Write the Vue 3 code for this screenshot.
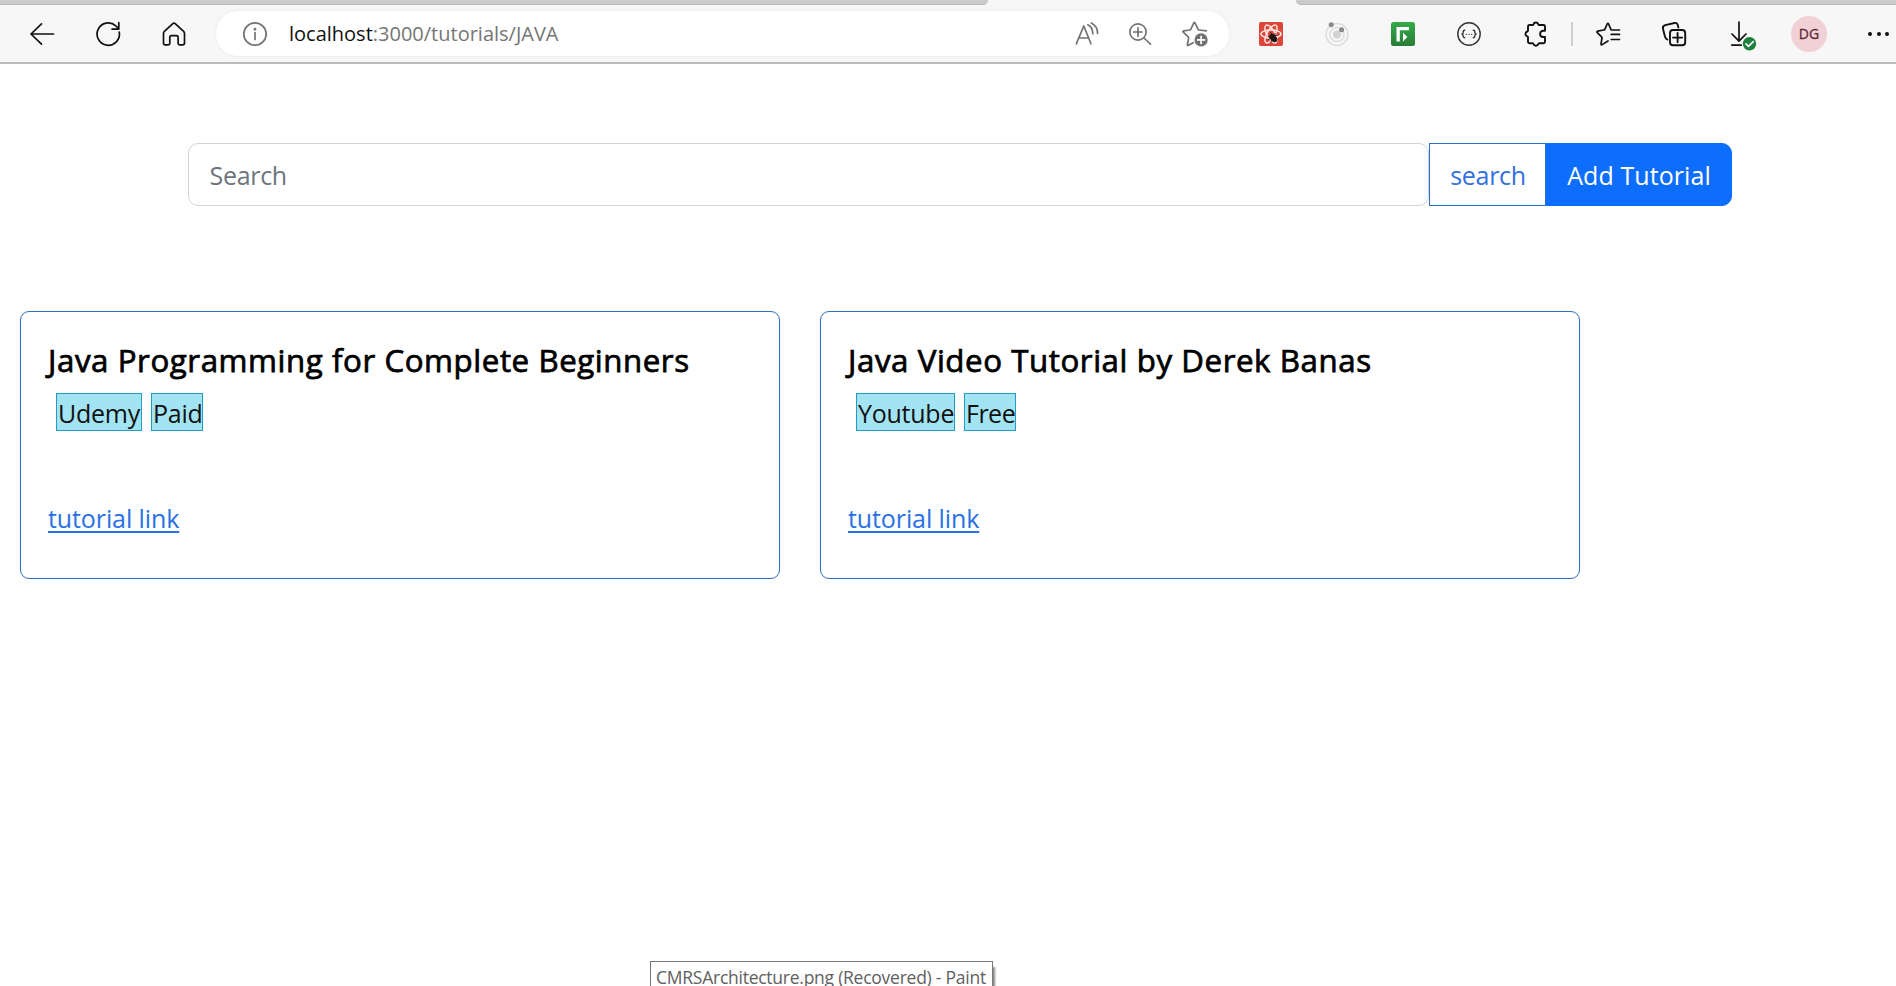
<script setup>
const tutorials = [
  { title: 'Java Programming for Complete Beginners', tags: ['Udemy', 'Paid'] },
  { title: 'Java Video Tutorial by Derek Banas', tags: ['Youtube', 'Free'] }
]
</script>

<template>
  <div class="window">
    <div class="tabs"><div class="tab-left"></div><div class="tab-right"></div></div>
    <header class="toolbar">
      <nav class="nav">
        <svg class="icon" viewBox="0 0 24 24"><path d="M23.500 12H1M11.500 1.800 1 12l10.500 10.200" /></svg>
        <svg class="icon" viewBox="0 0 24 24"><path d="M23.300 10.200A11.200 11.200 0 1 1 19.800 3.800L22.500 6.800M22.800.5v6.600h-6.800" /></svg>
        <svg class="icon" viewBox="0 0 24 24"><path d="M2.400 9.300 10.800 1.600q1.200-1 2.400 0l8.400 7.700q.9.900.9 2V21q0 1.800-1.800 1.800h-3.100q-1.500 0-1.500-1.500v-6q0-1.700-1.700-1.700H9.500q-1.700 0-1.700 1.700v6q0 1.500-1.500 1.500H3.200q-1.700 0-1.700-1.800v-9.700q0-1.200.9-2Z" /></svg>
      </nav>
      <div class="address">
        <svg class="icon gray info" viewBox="0 0 24 24"><circle cx="12" cy="12" r="11.200" /><path d="M12 10.500v7" /><circle cx="12" cy="7.200" r=".6" /></svg>
        <span class="url"><b>localhost</b>:3000/tutorials/JAVA</span>
        <div class="address-actions">
          <svg class="icon gray" viewBox="0 0 24 24"><path d="M1.300 21.800 8.800 4l7.200 17.800M4 16h9.800M12.800 2.800q5 2.400 5 9M16.300.9q6.300 3 6.300 10.600" /></svg>
          <svg class="icon gray" viewBox="0 0 24 24"><circle cx="10" cy="10" r="8.100" /><path d="M10 5.800v8.400M5.800 10h8.400M16 16l6.500 6.200" /></svg>
          <svg class="icon gray wide" viewBox="0 0 26 26"><path d="M24.300 9.900l-7.200-.9q-.8-.1-1.100-.8L13 1.900q-.6-1-1.200 0L8.900 8.200q-.3.700-1.100.8l-6.200.9q-1.200.3-.3 1.300l4.900 4.700q.5.500.4 1.200l-1.200 6.400q-.1 1.300 1 .8l4.800-2.600" /><circle class="solid" cx="19.100" cy="18.900" r="6.600" /><path class="light" d="M19.100 15.400v7M15.600 18.900h7" /></svg>
        </div>
      </div>
      <div class="extensions">
        <svg class="icon" viewBox="0 0 24 24"><rect width="24" height="24" rx="2" class="red" /><g class="atom"><ellipse cx="12" cy="12" rx="10" ry="4" /><ellipse cx="12" cy="12" rx="10" ry="4" transform="rotate(60 12 12)" /><ellipse cx="12" cy="12" rx="10" ry="4" transform="rotate(120 12 12)" /></g><g class="bug"><ellipse cx="14.300" cy="16" rx="2.600" ry="4.200" transform="rotate(-40 14.300 16)" /><path d="m9 14.500 9 4.500M11.500 10.500l6.500 6.500M13.500 13l-1.500 7M9.500 17.500l8.500-4.500M16 11.500v5" /></g></svg>
        <svg class="icon" viewBox="0 0 24 24"><circle cx="12" cy="12.500" r="11" class="orbit" /><circle cx="12" cy="12.500" r="7" class="orbit" /><circle cx="12" cy="12.500" r="4" class="core" /><circle cx="6.200" cy="2.800" r="2.500" class="moon" /><circle cx="16.600" cy="7.800" r="2.500" class="moon" /></svg>
        <svg class="icon" viewBox="0 0 24 24"><defs><linearGradient id="leaf" x2="0" y2="1"><stop stop-color="#35ab49" /><stop offset="1" stop-color="#277c36" /></linearGradient></defs><rect width="24" height="24" rx="2.500" fill="url(#leaf)" stroke="none" /><path class="white" d="M5.500 5h12.500v3.200H8.800V19.500H5.500ZM12 10.700l4.400 4.400-4.400 4.400Z" /></svg>
        <svg class="icon" viewBox="0 0 24 24"><circle cx="12" cy="12" r="11.200" class="ring" /><path class="ring" d="M7.700 8.300q-1.500 0-1.500 1.400 0 2-1.200 2.300 1.200.3 1.200 2.300 0 1.400 1.500 1.400M16.300 8.300q1.500 0 1.500 1.400 0 2 1.200 2.300-1.200.3-1.200 2.300 0 1.400-1.500 1.400" /><path class="dots-small" d="M9.200 12.300h.1M12 12.300h.1M14.700 12.300h.1" /></svg>
        <svg class="icon puzzle" viewBox="0 0 24 24"><path class="bold" d="M4 4.500q0-1.500 1.500-1.500H8.500q.9 0 1-.7a2.500 2.500 0 0 1 4.800 0q.1.700 1 .7H19.500q1.500 0 1.500 1.500v4.300h-1.800a3 3 0 0 0 0 6.200h1.800v4.700q0 1.500-1.500 1.500h-4.200q-.9 0-1 .7a2.500 2.500 0 0 1-4.800 0q-.1-.7-1-.7H5.500q-1.500 0-1.500-1.500v-4.500q0-.7-.7-.9a2.500 2.500 0 0 1 0-4.800q.7-.2.700-.9Z" /></svg>
      </div>
      <div class="divider"></div>
      <div class="tools">
        <svg class="icon" viewBox="0 0 24 24"><path d="M23.500 8H16q-.8 0-1.100-.7L12.600 2q-.7-1.200-1.400 0L8.800 7.300Q8.500 8 7.700 8L1.600 9.200q-1.300.4-.3 1.400l4.300 4.200q.5.500.4 1.200l-1 5.800q0 1.400 1.200.8L12 19M15.200 12.400h8.300M15.200 17.500h8.300" /></svg>
        <svg class="icon" viewBox="0 0 24 24"><path class="bold" d="M5.300 17.500Q3.400 16.600 2.800 14L1 6.800Q.3 4 3.200 3.200L12.500 1q2.400-.5 3.100 1.600l.8 3" /><rect class="bold" x="8" y="8" width="15.200" height="15.200" rx="3" /><path class="bold" d="M15.600 11v9.200M11 15.600h9.200" /></svg>
        <svg class="icon tall" viewBox="0 0 26 30"><path d="M8 1v19M1 13l7 7.100 7-7.100M.8 24.100h9.500" /><circle cx="18.500" cy="22.800" r="6.700" class="green" /><path class="light" d="m15 22.800 2.500 2.500 4.700-4.700" /></svg>
      </div>
      <div class="avatar">DG</div>
      <div class="more"><i></i><i></i><i></i></div>
    </header>

    <main>
      <form class="search-row" @submit.prevent>
        <input type="text" placeholder="Search" />
        <button class="search-btn">search</button>
        <button class="add-btn">Add Tutorial</button>
      </form>
      <section class="cards">
        <article v-for="t in tutorials" :key="t.title" class="card">
          <h5>{{ t.title }}</h5>
          <div class="tags"><span v-for="tag in t.tags" :key="tag" :class="['tag', tag.toLowerCase()]">{{ tag }}</span></div>
          <a href="#">tutorial link</a>
        </article>
      </section>
    </main>
    <div class="tooltip">CMRSArchitecture.png (Recovered) - Paint</div>
  </div>
</template>

<style>
body { margin: 0; overflow: hidden; background: #fff; }
</style>

<style scoped>
* { box-sizing: border-box; }
.window { position: relative; width: 1896px; height: 986px; overflow: hidden; background: #fff; font-family: "Open Sans", "Noto Sans", sans-serif; }
.tabs { height: 5px; display: flex; justify-content: space-between; background: #f7f7f7; }
.tabs div { background: #cbcbcb; border-bottom: 1px solid #b9b9b9; }
.tab-left { width: 988px; border-bottom-right-radius: 5px; }
.tab-right { width: 600px; border-bottom-left-radius: 5px; }
.toolbar { height: 59px; display: flex; align-items: center; background: #f7f7f7; border-bottom: 2px solid #bbb; }
.icon { display: block; flex: none; width: 24px; height: 24px; fill: none; stroke: #111; stroke-width: 1.7; stroke-linecap: round; stroke-linejoin: round; overflow: visible; }
.gray { stroke: #737373; }
.nav { display: flex; gap: 42px; margin-left: 30px; }
.address { display: flex; align-items: center; width: 1013px; height: 45px; margin-left: 29.5px; padding-left: 27px; border-radius: 23px; background: #fff; box-shadow: 0 0 5px #0000000d; }
.url { margin-left: 22.5px; font-size: 20px; white-space: nowrap; color: #757575; }
.url b { font-weight: 400; color: #111; }
.address-actions { display: flex; margin-left: auto; margin-right: 21px; gap: 29.5px; align-items: center; }
.wide { width: 26px; height: 26px; }
.solid { fill: #707070; stroke: none; }
.light { stroke: #fff; }
.extensions { display: flex; gap: 42px; margin-left: 30.5px; }
.red { fill: #dc4538; stroke: none; }
.atom { stroke: #ffe6e2; stroke-width: 1.5; }
.bug { fill: #251512; stroke: #251512; stroke-width: 1; }
.orbit { stroke: #dedede; stroke-width: 1.6; }
.core { fill: #d2d2d2; stroke: none; }
.moon { fill: #888; stroke: none; }
.white { fill: #fff; stroke: none; }
.ring { stroke: #333; stroke-width: 1.4; }
.dots-small { stroke: #333; stroke-width: 1.3; }
.bold { stroke-width: 1.9; }
.puzzle { margin-left: 1px; }
.divider { width: 2px; height: 24px; margin-left: 23px; background: #d0d0d0; }
.tools { display: flex; margin-left: 23px; gap: 42px; align-items: center; }
.tall { width: 26px; height: 30px; margin-left: 3px; position: relative; top: 2px; }
.green { fill: #1b803c; stroke: none; }
.avatar { width: 36px; height: 36px; margin-left: 34px; border-radius: 50%; background: #f1d1d5; color: #5d2933; font-size: 14px; line-height: 36px; text-align: center; font-weight: 500; -webkit-text-stroke: .3px #5d2933; }
.more { display: flex; gap: 4.5px; margin-left: 41px; }
.more i { width: 4px; height: 4px; border-radius: 50%; background: #111; }
.search-row { display: flex; width: 1544px; height: 63px; margin: 79px 0 0 188px; }
input, button { margin: 0; font-family: inherit; font-size: 25px; }
input { width: 1241px; padding: 1px 20px 0 20.5px; border: 1px solid #ced4da; border-radius: 10px; outline: none; letter-spacing: -.3px; }
input::placeholder { color: #6c757d; opacity: 1; }
button { padding: 0; white-space: nowrap; border: 1px solid #0d6efd; }
.search-btn { width: 117px; padding: 1px 0 0 1px; color: #3470df; background: #fff; border-color: #2a70c5; letter-spacing: -.3px; }
.add-btn { flex: 1; padding-top: 1px; color: #fff; background: #0d6efd; border-radius: 0 10px 10px 0; letter-spacing: .08px; }
.cards { display: grid; grid-template-columns: 760px 760px; gap: 40px; margin: 105px 0 0 20px; }
.card { height: 268px; padding: 28px 27px; border: 1px solid #2d70bd; border-radius: 9px; }
h5 { margin: 0; height: 40px; line-height: 40px; font-size: 31.25px; font-weight: 400; -webkit-text-stroke: .75px #000; white-space: nowrap; color: #000; letter-spacing: .57px; }
.tags { display: flex; gap: 9px; margin: 13px 0 0 8px; height: 38px; }
.tag { border: 1px solid #239bc5; padding-left: 1px; background: #a2e4f4; color: #111; font-size: 25px; line-height: 39px; letter-spacing: -.25px; white-space: nowrap; }
.udemy { width: 86px; }
.paid { width: 52px; }
.youtube { width: 99px; }
.free { width: 52px; letter-spacing: -.5px; }
a { display: inline-block; margin-top: 68px; font-size: 25px; line-height: 38px; letter-spacing: -.1px; color: #2870e5; text-decoration-thickness: 2px; text-underline-offset: 3px; }
.tooltip { position: absolute; left: 650px; top: 961px; width: 343px; height: 36px; padding-left: 5px; border: 1px solid #777; background: #fff; box-shadow: 2px 6px 2px #0007; color: #606060; font-size: 17.5px; letter-spacing: -.25px; line-height: 30px; white-space: nowrap; }
</style>
